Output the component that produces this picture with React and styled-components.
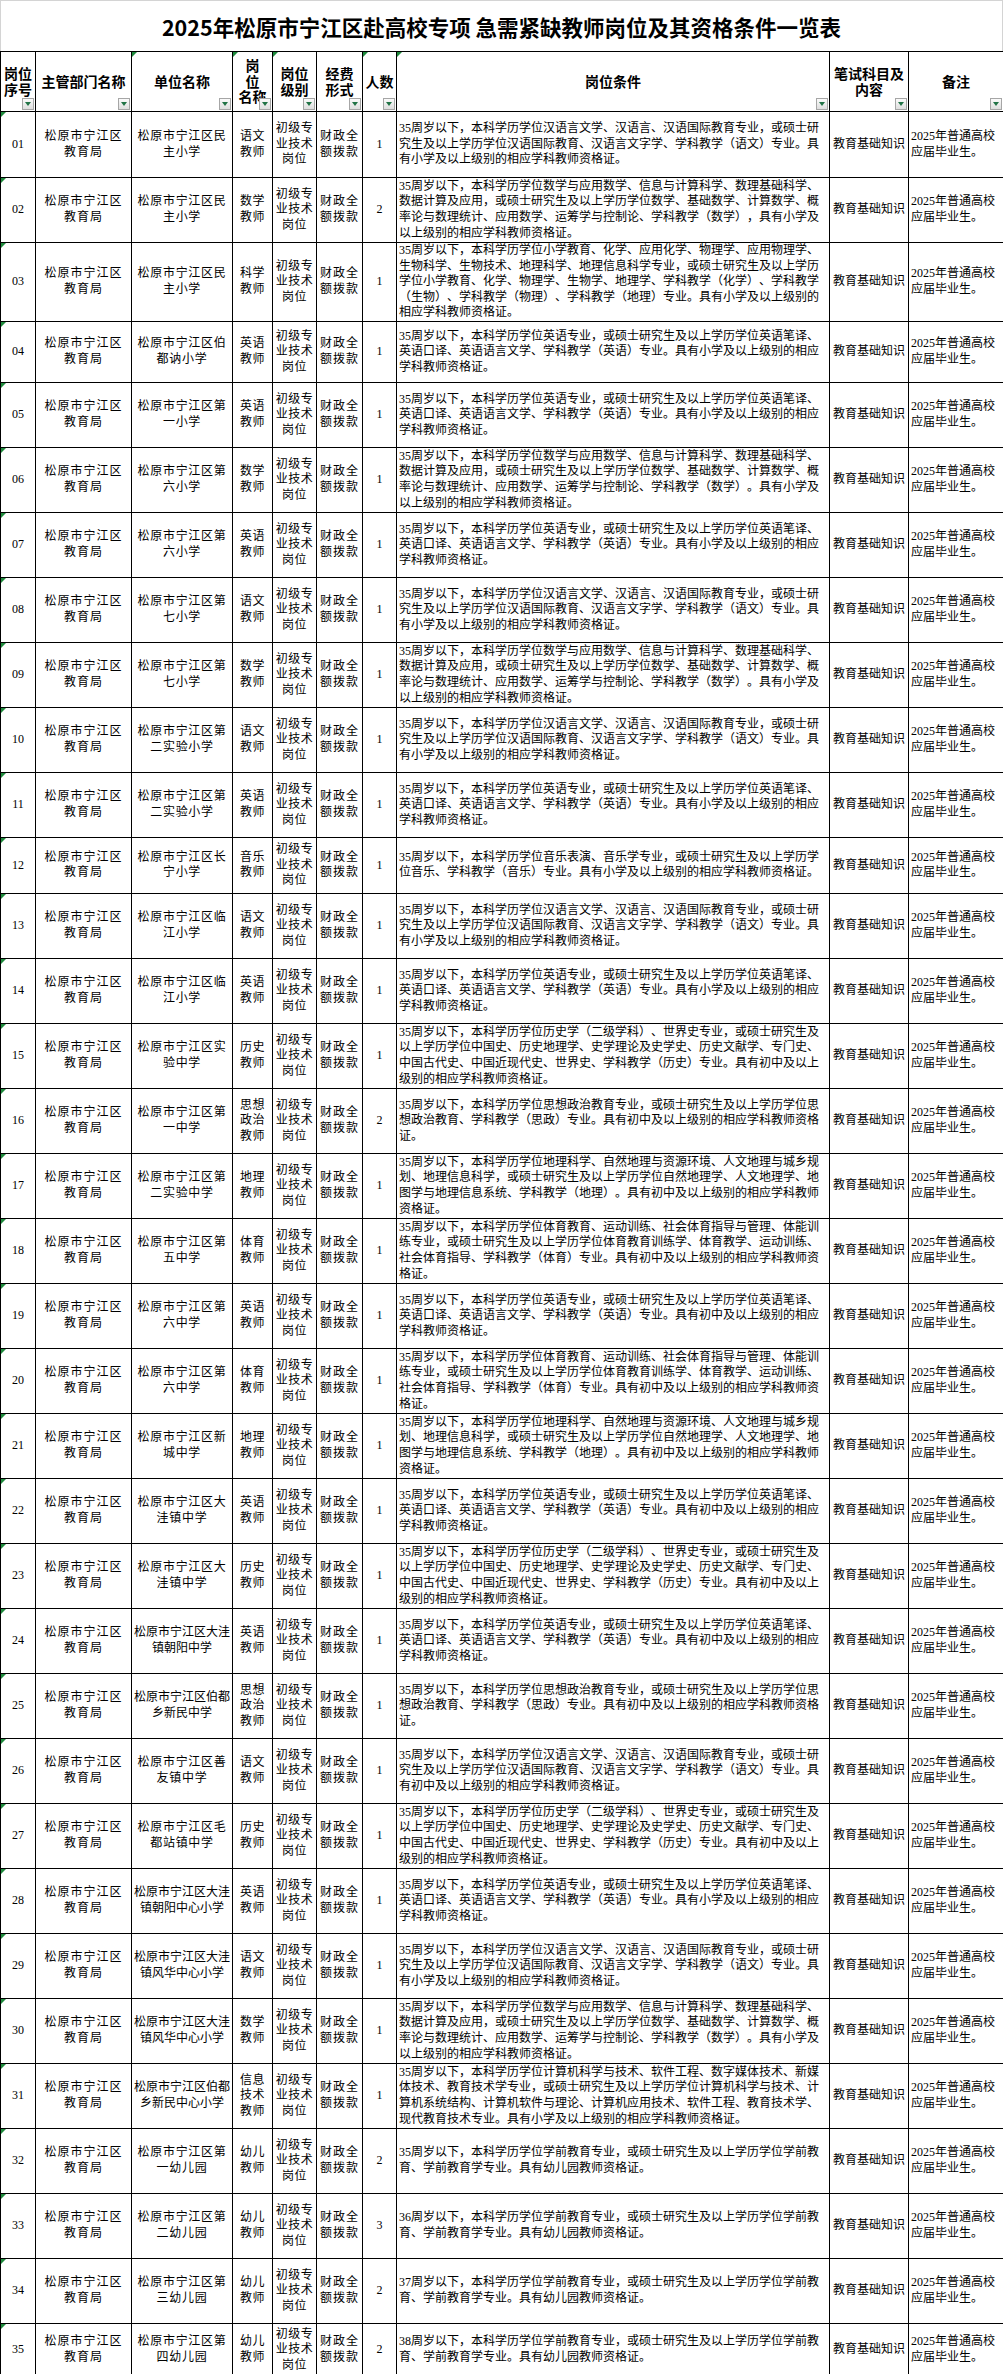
import React from 'react';
import styled, { createGlobalStyle } from 'styled-components';

const GlobalStyle = createGlobalStyle`
  html, body {
    margin: 0;
    padding: 0;
    background: #fff;
  }
  body {
    font-family: "Liberation Serif", "Noto Sans CJK SC", serif;
    color: #000;
  }
`;

const Title = styled.div`
  height: 51px;
  box-sizing: border-box;
  border: 1px solid #d4d4d4;
  border-bottom: none;
  display: flex;
  align-items: center;
  justify-content: center;
  font-family: "Noto Sans CJK SC", sans-serif;
  font-weight: 700;
  font-size: 21.5px;
  letter-spacing: 0;
`;

const Sheet = styled.table`
  border-collapse: collapse;
  table-layout: fixed;
  width: 1003px;
`;

const HeadRow = styled.tr`
  height: 60px;
`;

const HeadCell = styled.th`
  position: relative;
  border: 1px solid #000;
  padding: 0;
  font-family: "Noto Sans CJK SC", sans-serif;
  font-weight: 700;
  font-size: 14px;
  line-height: 15.5px;
  text-align: center;
  vertical-align: middle;
  white-space: nowrap;
`;

const FilterButton = styled.span`
  position: absolute;
  right: 1px;
  bottom: 1px;
  width: 12px;
  height: 12px;
  box-sizing: border-box;
  border: 1px solid #a6a6a6;
  background: linear-gradient(#fbfbfb, #dedede);
  display: flex;
  align-items: center;
  justify-content: center;

  &::after {
    content: '';
    width: 0;
    height: 0;
    border-left: 3px solid transparent;
    border-right: 3px solid transparent;
    border-top: 4px solid #217346;
  }
`;

const ErrorMark = styled.span`
  position: absolute;
  top: 0;
  left: 0;
  width: 0;
  height: 0;
  border-top: 5px solid #1e8a3c;
  border-right: 5px solid transparent;
`;

const Row = styled.tr`
  height: ${(p) => p.$h}px;
`;

const Cell = styled.td`
  position: relative;
  border: 1px solid #000;
  padding: 0 ${(p) => (p.$left ? '2px' : '0')};
  font-size: 12px;
  line-height: 15.6px;
  letter-spacing: ${(p) => p.$spacing || 0}px;
  text-align: ${(p) => (p.$left ? 'left' : 'center')};
  vertical-align: middle;
  white-space: nowrap;
  overflow: hidden;
  text-spacing-trim: space-all;
`;

const widths = [35, 96, 101, 40, 44, 46, 34, 433, 79, 95];

const Lines = ({ lines }) =>
  lines.map((l, i) => (
    <React.Fragment key={i}>
      {i > 0 && <br />}
      {l}
    </React.Fragment>
  ));

const head = [
  { lines: ['岗位', '序号'] },
  { lines: ['主管部门名称'] },
  { lines: ['单位名称'], mark: true },
  { lines: ['岗', '位', '名称'], mark: true },
  { lines: ['岗位', '级别'], mark: true },
  { lines: ['经费', '形式'] },
  { lines: ['人数'], mark: true },
  { lines: ['岗位条件'], mark: true },
  { lines: ['笔试科目及', '内容'] },
  { lines: ['备注'] },
];

// 岗位条件模板
const YW = (lvl) => [
  '35周岁以下，本科学历学位汉语言文学、汉语言、汉语国际教育专业，或硕士研',
  '究生及以上学历学位汉语国际教育、汉语言文字学、学科教学（语文）专业。具',
  `有${lvl}及以上级别的相应学科教师资格证。`,
];
const SX = (p) => [
  '35周岁以下，本科学历学位数学与应用数学、信息与计算科学、数理基础科学、',
  '数据计算及应用，或硕士研究生及以上学历学位数学、基础数学、计算数学、概',
  `率论与数理统计、应用数学、运筹学与控制论、学科教学（数学）${p}具有小学及`,
  '以上级别的相应学科教师资格证。',
];
const KX = [
  '35周岁以下，本科学历学位小学教育、化学、应用化学、物理学、应用物理学、',
  '生物科学、生物技术、地理科学、地理信息科学专业，或硕士研究生及以上学历',
  '学位小学教育、化学、物理学、生物学、地理学、学科教学（化学）、学科教学',
  '（生物）、学科教学（物理）、学科教学（地理）专业。具有小学及以上级别的',
  '相应学科教师资格证。',
];
const YY = (lvl) => [
  '35周岁以下，本科学历学位英语专业，或硕士研究生及以上学历学位英语笔译、',
  `英语口译、英语语言文学、学科教学（英语）专业。具有${lvl}及以上级别的相应`,
  '学科教师资格证。',
];
const YL = [
  '35周岁以下，本科学历学位音乐表演、音乐学专业，或硕士研究生及以上学历学',
  '位音乐、学科教学（音乐）专业。具有小学及以上级别的相应学科教师资格证。',
];
const LS = [
  '35周岁以下，本科学历学位历史学（二级学科）、世界史专业，或硕士研究生及',
  '以上学历学位中国史、历史地理学、史学理论及史学史、历史文献学、专门史、',
  '中国古代史、中国近现代史、世界史、学科教学（历史）专业。具有初中及以上',
  '级别的相应学科教师资格证。',
];
const ZZ = [
  '35周岁以下，本科学历学位思想政治教育专业，或硕士研究生及以上学历学位思',
  '想政治教育、学科教学（思政）专业。具有初中及以上级别的相应学科教师资格',
  '证。',
];
const DL = [
  '35周岁以下，本科学历学位地理科学、自然地理与资源环境、人文地理与城乡规',
  '划、地理信息科学，或硕士研究生及以上学历学位自然地理学、人文地理学、地',
  '图学与地理信息系统、学科教学（地理）。具有初中及以上级别的相应学科教师',
  '资格证。',
];
const TY = [
  '35周岁以下，本科学历学位体育教育、运动训练、社会体育指导与管理、体能训',
  '练专业，或硕士研究生及以上学历学位体育教育训练学、体育教学、运动训练、',
  '社会体育指导、学科教学（体育）专业。具有初中及以上级别的相应学科教师资',
  '格证。',
];
const XX = [
  '35周岁以下，本科学历学位计算机科学与技术、软件工程、数字媒体技术、新媒',
  '体技术、教育技术学专业，或硕士研究生及以上学历学位计算机科学与技术、计',
  '算机系统结构、计算机软件与理论、计算机应用技术、软件工程、教育技术学、',
  '现代教育技术专业。具有小学及以上级别的相应学科教师资格证。',
];
const YE = (age) => [
  `${age}周岁以下，本科学历学位学前教育专业，或硕士研究生及以上学历学位学前教`,
  '育、学前教育学专业。具有幼儿园教师资格证。',
];

const u = (a, b) => ['松原市宁江区' + a, b];
const T = (a) => [a, '教师'];

const rows = [
  ['01', u('民', '主小学'), T('语文'), 1, YW('小学'), 66],
  ['02', u('民', '主小学'), T('数学'), 2, SX('，'), 65],
  ['03', u('民', '主小学'), T('科学'), 1, KX, 76],
  ['04', u('伯', '都讷小学'), T('英语'), 1, YY('小学'), 61],
  ['05', u('第', '一小学'), T('英语'), 1, YY('小学'), 65],
  ['06', u('第', '六小学'), T('数学'), 1, SX('。'), 65],
  ['07', u('第', '六小学'), T('英语'), 1, YY('小学'), 65],
  ['08', u('第', '七小学'), T('语文'), 1, YW('小学'), 65],
  ['09', u('第', '七小学'), T('数学'), 1, SX('。'), 65],
  ['10', u('第', '二实验小学'), T('语文'), 1, YW('小学'), 65],
  ['11', u('第', '二实验小学'), T('英语'), 1, YY('小学'), 65],
  ['12', u('长', '宁小学'), T('音乐'), 1, YL, 56],
  ['13', u('临', '江小学'), T('语文'), 1, YW('小学'), 65],
  ['14', u('临', '江小学'), T('英语'), 1, YY('小学'), 65],
  ['15', u('实', '验中学'), T('历史'), 1, LS, 65],
  ['16', u('第', '一中学'), ['思想', '政治', '教师'], 2, ZZ, 65],
  ['17', u('第', '二实验中学'), T('地理'), 1, DL, 65],
  ['18', u('第', '五中学'), T('体育'), 1, TY, 65],
  ['19', u('第', '六中学'), T('英语'), 1, YY('初中'), 65],
  ['20', u('第', '六中学'), T('体育'), 1, TY, 65],
  ['21', u('新', '城中学'), T('地理'), 1, DL, 65],
  ['22', u('大', '洼镇中学'), T('英语'), 1, YY('初中'), 65],
  ['23', u('大', '洼镇中学'), T('历史'), 1, LS, 65],
  ['24', u('大洼', '镇朝阳中学'), T('英语'), 1, YY('初中'), 65],
  ['25', u('伯都', '乡新民中学'), ['思想', '政治', '教师'], 1, ZZ, 65],
  ['26', u('善', '友镇中学'), T('语文'), 1, YW('初中'), 65],
  ['27', u('毛', '都站镇中学'), T('历史'), 1, LS, 65],
  ['28', u('大洼', '镇朝阳中心小学'), T('英语'), 1, YY('小学'), 65],
  ['29', u('大洼', '镇风华中心小学'), T('语文'), 1, YW('小学'), 65],
  ['30', u('大洼', '镇风华中心小学'), T('数学'), 1, SX('。'), 65],
  ['31', u('伯都', '乡新民中心小学'), ['信息', '技术', '教师'], 1, XX, 65],
  ['32', u('第', '一幼儿园'), T('幼儿'), 2, YE(35), 65],
  ['33', u('第', '二幼儿园'), T('幼儿'), 3, YE(36), 65],
  ['34', u('第', '三幼儿园'), T('幼儿'), 2, YE(37), 65],
  ['35', u('第', '四幼儿园'), T('幼儿'), 2, YE(38), 53],
];

export default function App() {
  return (
    <>
      <GlobalStyle />
      <Title>2025年松原市宁江区赴高校专项 急需紧缺教师岗位及其资格条件一览表</Title>
      <Sheet>
        <colgroup>
          {widths.map((w, i) => (
            <col key={i} style={{ width: w }} />
          ))}
        </colgroup>
        <thead>
          <HeadRow>
            {head.map((h, i) => (
              <HeadCell key={i}>
                {h.mark && <ErrorMark />}
                <Lines lines={h.lines} />
                <FilterButton />
              </HeadCell>
            ))}
          </HeadRow>
        </thead>
        <tbody>
          {rows.map(([no, unit, post, count, cond, h]) => (
            <Row key={no} $h={h}>
              <Cell>
                <ErrorMark />
                {no}
              </Cell>
              <Cell $spacing={1}>
                <Lines lines={['松原市宁江区', '教育局']} />
              </Cell>
              <Cell $spacing={unit[0].length > 7 ? 0 : 0.7}>
                <Lines lines={unit} />
              </Cell>
              <Cell $spacing={0.5}>
                <Lines lines={post} />
              </Cell>
              <Cell $spacing={0.5}>
                <Lines lines={['初级专', '业技术', '岗位']} />
              </Cell>
              <Cell $spacing={1}>
                <Lines lines={['财政全', '额拨款']} />
              </Cell>
              <Cell>{count}</Cell>
              <Cell $left>
                <Lines lines={cond} />
              </Cell>
              <Cell>教育基础知识</Cell>
              <Cell $left>
                <Lines lines={['2025年普通高校', '应届毕业生。']} />
              </Cell>
            </Row>
          ))}
        </tbody>
      </Sheet>
    </>
  );
}
